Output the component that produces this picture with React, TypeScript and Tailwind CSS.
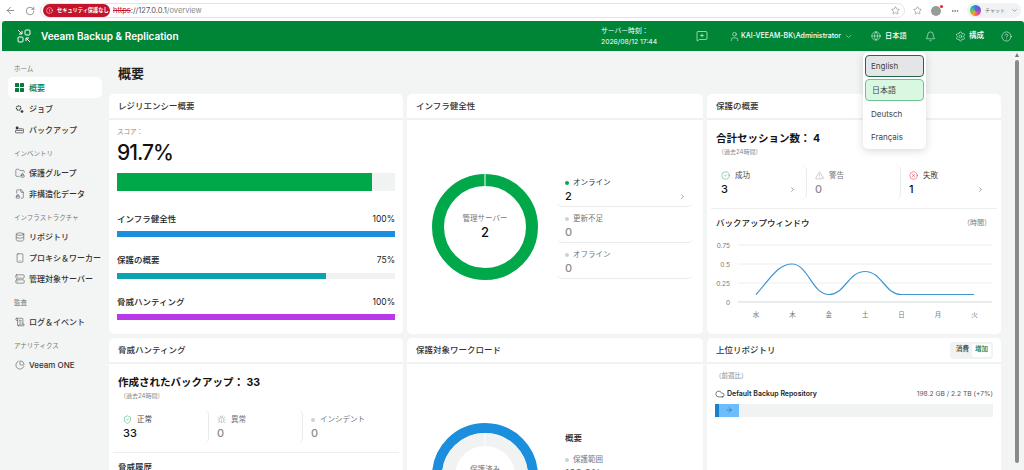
import {
  ArrowLeft, ArrowRight, Bell, ChevronDown, ChevronRight, CircleAlert, CircleCheck, CircleHelp, CircleX, Cloud, Database,
  Ellipsis, FileLock2, FolderLock, Globe, ChartPie, MessageSquarePlus, RotateCw, ScrollText, Server, Settings,
  ShieldCheck, Smartphone, Star, TriangleAlert, User, Bug,
} from "lucide-react"
import type { ReactNode } from "react"

const font = "font-['Inter','Noto_Sans_CJK_JP',sans-serif]"

function BrowserBar() {
  return (
    <div className="flex h-[21px] shrink-0 items-center bg-white pl-[4px]">
      <ArrowLeft className="ml-[1px] h-[11px] w-[11px] text-[#555]" strokeWidth={1.4} />
      <RotateCw className="ml-[9px] h-[10px] w-[10px] text-[#555]" strokeWidth={1.4} />
      <div className="ml-[5px] flex h-[15px] w-[865px] items-center rounded-full border border-[#e4e4e4] pl-[2px] pr-[2px]">
        <div className="flex h-[13px] w-[67px] items-center whitespace-nowrap rounded-full bg-[#c4132a] pl-[3px] text-[5.2px] font-bold text-white">
          <CircleAlert className="mr-[4px] h-[7px] w-[7px] shrink-0" strokeWidth={1.6} />
          <span>セキュリティ保護なし</span>
        </div>
        <p className="ml-[3px] whitespace-nowrap text-[7.5px] text-[#555]">
          <span className="text-[#c4132a] line-through">https</span>://127.0.0.1<span className="text-[#888]">/overview</span>
        </p>
        <Star className="ml-auto mr-[2px] h-[9px] w-[9px] text-[#666]" strokeWidth={1.3} />
      </div>
      <Star className="ml-[8px] h-[9px] w-[9px] text-[#666]" strokeWidth={1.3} />
      <div className="relative ml-[9px] h-[10px] w-[10px] rounded-full bg-[#9a9a9a]">
        <div className="absolute -right-[2px] -top-[1px] h-[3px] w-[3px] rounded-full bg-[#d9263a]" />
      </div>
      <Ellipsis className="ml-[10px] h-[8px] w-[8px] text-[#555]" />
      <div className="ml-[8px] flex h-[15px] w-[54px] items-center whitespace-nowrap rounded-full bg-[#f1f2f3] pl-[3px] text-[5px] text-[#666]">
        <div className="h-[11px] w-[11px] shrink-0 rounded-full bg-[conic-gradient(#2f7be8,#7a4fd8,#e8508a,#f5a623,#3cc48a,#2f7be8)]" />
        <span className="ml-[4px]">チャット</span>
        <ChevronDown className="ml-auto mr-[3px] h-[7px] w-[7px]" />
      </div>
    </div>
  )
}

function Logo() {
  return (
    <svg viewBox="0 0 14 14" className="h-[14px] w-[14px]" fill="none" stroke="white" strokeWidth="1">
      <rect x="8" y="1" width="5" height="5" rx="1" />
      <rect x="1" y="8" width="5" height="5" rx="1" />
      <path d="M1 1l4 4M5 2v3H2M9 9l4 4M9 12V9h3" />
    </svg>
  )
}

function Header() {
  return (
    <div className="ml-[2px] flex h-[30px] shrink-0 items-center whitespace-nowrap rounded-t-[3px] bg-[#008537] text-white">
      <div className="ml-[15px]"><Logo /></div>
      <p className="ml-[10px] w-[560px] text-[10px] font-semibold">Veeam Backup &amp; Replication</p>
      <div className="w-[95px] text-[6.8px] leading-[11px]">
        <p>サーバー時刻：</p>
        <p>2026/08/12 17:44</p>
      </div>
      <MessageSquarePlus className="h-[12px] w-[12px]" strokeWidth={1.2} />
      <User className="ml-[21px] h-[11px] w-[11px]" strokeWidth={1.2} />
      <p className="ml-[1px] w-[100px] text-[7px] font-medium">KAI-VEEAM-BK\Administrator</p>
      <ChevronDown className="ml-[3px] h-[9px] w-[9px]" strokeWidth={1.2} />
      <Globe className="ml-[18px] h-[10px] w-[10px]" strokeWidth={1.2} />
      <p className="ml-[4px] w-[22px] text-[7.2px] font-medium">日本語</p>
      <Bell className="ml-[18px] h-[11px] w-[11px]" strokeWidth={1.2} />
      <Settings className="ml-[19px] h-[11px] w-[11px]" strokeWidth={1.2} />
      <p className="ml-[3px] w-[15px] text-[7.5px] font-medium">構成</p>
      <CircleHelp className="ml-[17px] h-[11px] w-[11px]" strokeWidth={1.2} />
    </div>
  )
}

function GridIcon() {
  return (
    <svg viewBox="0 0 9 9" className="h-[9px] w-[9px]" fill="#0a7a3c">
      <rect width="4" height="4" rx=".5" />
      <rect x="5" width="4" height="4" rx=".5" />
      <rect y="5" width="4" height="4" rx=".5" />
      <rect x="5" y="5" width="4" height="4" rx=".5" />
    </svg>
  )
}

function JobIcon() {
  return (
    <svg viewBox="0 0 10 10" className="h-[10px] w-[10px]" fill="none" stroke="#444" strokeWidth="1">
      <circle cx="4" cy="4" r="2.4" strokeDasharray="1.4 .5" strokeWidth="1.4" />
      <circle cx="7.8" cy="7.8" r="1.5" fill="#333" stroke="none" />
    </svg>
  )
}

function BackupIcon() {
  return (
    <svg viewBox="0 0 11 10" className="h-[10px] w-[11px]" fill="none" stroke="#444" strokeWidth=".9">
      <circle cx="2.6" cy="2.6" r="1.8" fill="#333" stroke="none" />
      <path d="M4.5 3.5h5a1 1 0 0 1 1 1v3a1 1 0 0 1-1 1h-8a1 1 0 0 1-1-1V5.5h9" />
    </svg>
  )
}

function NavLabel({ text }: { text: string }) {
  return <p className="mb-[2px] mt-[6px] h-[14px] pl-[14px] pt-[3px] text-[6.5px] leading-[11px] text-[#777] first:mt-0">{text}</p>
}

function NavItem({ icon, text, active }: { icon: ReactNode; text: string; active?: boolean }) {
  return (
    <div className={`ml-[8px] flex h-[21px] w-[94px] items-center gap-[5px] rounded-[5px] pl-[7px] text-[8px] font-medium ${active ? "bg-white text-[#0a7a3c]" : "text-[#333]"}`}>
      <span className="flex w-[9px] justify-center">{icon}</span>
      <span>{text}</span>
    </div>
  )
}

const ic = "h-[10px] w-[10px] shrink-0 text-[#444]"

function Sidebar() {
  return (
    <div className="w-[108px] shrink-0 pt-[10px]">
      <NavLabel text="ホーム" />
      <NavItem active icon={<GridIcon />} text="概要" />
      <NavItem icon={<JobIcon />} text="ジョブ" />
      <NavItem icon={<BackupIcon />} text="バックアップ" />
      <NavLabel text="インベントリ" />
      <NavItem icon={<FolderLock className={ic} strokeWidth={1.3} />} text="保護グループ" />
      <NavItem icon={<FileLock2 className={ic} strokeWidth={1.3} />} text="非構造化データ" />
      <NavLabel text="インフラストラクチャ" />
      <NavItem icon={<Database className={ic} strokeWidth={1.3} />} text="リポジトリ" />
      <NavItem icon={<Smartphone className={ic} strokeWidth={1.3} />} text="プロキシ＆ワーカー" />
      <NavItem icon={<Server className={ic} strokeWidth={1.3} />} text="管理対象サーバー" />
      <NavLabel text="監査" />
      <NavItem icon={<ScrollText className={ic} strokeWidth={1.3} />} text="ログ＆イベント" />
      <NavLabel text="アナリティクス" />
      <NavItem icon={<ChartPie className={ic} strokeWidth={1.3} />} text="Veeam ONE" />
    </div>
  )
}

function Card({ title, right, children }: { title: string; right?: ReactNode; children: ReactNode }) {
  return (
    <div className="flex h-[240px] flex-col rounded-[5px] bg-white">
      <div className="flex h-[26px] shrink-0 items-center justify-between border-b-2 border-[#f0f2f2] pl-[9px] pr-[8px]">
        <p className="text-[8.5px] font-medium text-[#333]">{title}</p>
        {right}
      </div>
      <div className="min-h-0 flex-1">{children}</div>
    </div>
  )
}

function Meter({ name, value, color, pct }: { name: string; value: string; color: string; pct: string }) {
  return (
    <div className="mb-[16.5px]">
      <div className="flex h-[14px] items-center justify-between text-[8.5px] font-medium text-[#222]">
        <span>{name}</span>
        <span className="font-normal">{value}</span>
      </div>
      <div className="mt-[5px] h-[6px] bg-[#f1f3f3]">
        <div className={`h-full ${color} ${pct}`} />
      </div>
    </div>
  )
}

function Resilience() {
  return (
    <div className="px-[8px] pt-[7px]">
      <p className="text-[6.5px] leading-[10px] text-[#888]">スコア：</p>
      <p className="mt-[2px] text-[21px] font-medium leading-[28px] tracking-[-1px] text-[#111]">91.7%</p>
      <div className="mt-[6px] h-[18px] bg-[#f1f3f3]">
        <div className="h-full w-[91.7%] bg-[#00a84a]" />
      </div>
      <div className="mt-[21px]">
        <Meter name="インフラ健全性" value="100%" color="bg-[#1b8fdd]" pct="w-full" />
        <Meter name="保護の概要" value="75%" color="bg-[#0ca3b0]" pct="w-3/4" />
        <Meter name="脅威ハンティング" value="100%" color="bg-[#b938ea]" pct="w-full" />
      </div>
    </div>
  )
}

function LegendRow({ label, value, on, arrow }: { label: string; value: string; on?: boolean; arrow?: boolean }) {
  return (
    <div className="h-[36px] rounded-b-[5px] border-b border-[#e9ebeb] pl-[8px] pr-[7px] pt-[6px]">
      <div className={`flex h-[11px] items-center gap-[4px] text-[7.5px] ${on ? "text-[#333]" : "text-[#777]"}`}>
        <span className={`h-[4px] w-[4px] rounded-full ${on ? "bg-[#00a84a]" : "bg-[#cfd2d2]"}`} />
        {label}
      </div>
      <div className={`mt-[1px] flex items-center justify-between text-[11px] font-medium leading-[14px] ${on ? "text-[#111]" : "text-[#8a8a8a]"}`}>
        {value}
        {arrow && <ChevronRight className="h-[7px] w-[7px] text-[#555]" />}
      </div>
    </div>
  )
}

function Infra() {
  return (
    <div className="flex h-full items-center pl-[25px]">
      <div className="relative h-[106px] w-[106px] shrink-0">
        <svg viewBox="0 0 106 106" className="h-full w-full">
          <circle cx="53" cy="53" r="47" fill="none" stroke="#00a84a" strokeWidth="12" />
          <rect x="52.5" y="0" width="1" height="12" fill="white" />
        </svg>
        <div className="absolute inset-0 flex flex-col items-center justify-center">
          <p className="text-[7.5px] text-[#777]">管理サーバー</p>
          <p className="text-[13px] font-medium leading-[17px] text-[#111]">2</p>
        </div>
      </div>
      <div className="mb-[4px] ml-[19px] w-[136px]">
        <LegendRow on arrow label="オンライン" value="2" />
        <LegendRow label="更新不足" value="0" />
        <LegendRow label="オフライン" value="0" />
      </div>
    </div>
  )
}

function Stat({ icon, label, value, dim, arrow, last }: { icon: ReactNode; label: string; value: string; dim?: boolean; arrow?: boolean; last?: boolean }) {
  return (
    <div className={`h-[35px] flex-1 rounded-r-[6px] pl-[8px] pr-[10px] pt-[5px] ${last ? "" : "border-r border-[#e9ebeb]"}`}>
      <div className={`flex h-[11px] items-center gap-[5px] text-[7.5px] ${dim ? "text-[#777]" : "text-[#444]"}`}>
        {icon}
        {label}
      </div>
      <div className={`mt-[1px] flex items-center justify-between text-[11px] font-medium leading-[14px] ${dim ? "text-[#8a8a8a]" : "text-[#111]"}`}>
        {value}
        {arrow && <ChevronRight className="h-[7px] w-[7px] text-[#555]" />}
      </div>
    </div>
  )
}

function BackupChart() {
  const days = ["水", "木", "金", "土", "日", "月", "火"]
  const rows = [
    { y: 245, t: "0.75" },
    { y: 264, t: "0.5" },
    { y: 283, t: "0.25" },
    { y: 302, t: "0" },
  ]
  return (
    <svg viewBox="711 238 286 84" className="mt-[8px] h-[84px] w-[286px]">
      {rows.map((r) => (
        <g key={r.t}>
          <line x1="738" x2="992" y1={r.y} y2={r.y} stroke={r.t === "0" ? "#d5d8d8" : "#eceeee"} />
          <text x="730" y={r.y + 2.5} textAnchor="end" fontSize="6.5" fill="#777">{r.t}</text>
        </g>
      ))}
      {days.map((d, i) => (
        <text key={d} x={756 + i * 36.4} y="317" textAnchor="middle" fontSize="6.5" fill="#777">{d}</text>
      ))}
      <path
        d="M756 294.5C770 279 778 264 792 264C808 264 812 294.5 829 294.5C845 294.5 848 271.5 865 271.5C882 271.5 885 294.5 901 294.5L974 294.5"
        fill="none"
        stroke="#3d97d3"
        strokeWidth="1.2"
      />
    </svg>
  )
}

function SummaryTop({ title, children }: { title: string; children: ReactNode }) {
  return (
    <>
      <div className="pl-[5px] pt-[12px]">
        <p className="text-[10.5px] font-bold leading-[14px] text-[#111]">{title}</p>
        <p className="mt-[1px] pl-[2px] text-[6px] leading-[10px] text-[#888]">（過去24時間）</p>
      </div>
      <div className="mt-[8px] flex border-b border-[#edefef] pb-[8px] pl-[2px] pr-[3px]">{children}</div>
    </>
  )
}

function ProtectionSummary() {
  return (
    <div className="px-[4px]">
      <SummaryTop title="合計セッション数： 4">
        <Stat icon={<CircleCheck className="h-[9px] w-[9px] text-[#2fa565]" strokeWidth={1.3} />} label="成功" value="3" arrow />
        <Stat dim icon={<TriangleAlert className="h-[9px] w-[9px] text-[#999]" strokeWidth={1.3} />} label="警告" value="0" />
        <Stat last icon={<CircleX className="h-[9px] w-[9px] text-[#d9263a]" strokeWidth={1.3} />} label="失敗" value="1" arrow />
      </SummaryTop>
      <div className="mt-[8px] flex items-center justify-between pl-[5px] pr-[6px]">
        <p className="text-[8.5px] font-medium text-[#222]">バックアップウィンドウ</p>
        <p className="text-[7px] text-[#777]">（時間）</p>
      </div>
      <BackupChart />
    </div>
  )
}

function Threat() {
  return (
    <div className="px-[4px]">
      <SummaryTop title="作成されたバックアップ： 33">
        <Stat icon={<ShieldCheck className="h-[9px] w-[9px] text-[#2fa565]" strokeWidth={1.3} />} label="正常" value="33" />
        <Stat dim icon={<Bug className="h-[9px] w-[9px] text-[#aaa]" strokeWidth={1.2} />} label="異常" value="0" />
        <Stat last dim icon={<span className="h-[4px] w-[4px] rounded-full bg-[#cfd2d2]" />} label="インシデント" value="0" />
      </SummaryTop>
      <p className="mt-[8px] pl-[5px] text-[8.5px] font-medium text-[#222]">脅威履歴</p>
    </div>
  )
}

function Workloads() {
  return (
    <div className="flex pl-[25px] pt-[59px]">
      <div className="relative h-[106px] w-[106px] shrink-0">
        <svg viewBox="0 0 106 106" className="h-full w-full">
          <circle cx="53" cy="53" r="48" fill="none" stroke="#1b8fdd" strokeWidth="10" />
          <circle cx="53" cy="53" r="36.5" fill="none" stroke="#f1f3f3" strokeWidth="13" />
          <rect x="52.5" y="10" width="1" height="20" fill="white" />
        </svg>
        <p className="absolute inset-x-0 top-[41px] text-center text-[7.5px] text-[#777]">保護済み</p>
      </div>
      <div className="ml-[27px] pt-[9px]">
        <p className="text-[8.5px] font-medium leading-[12px] text-[#222]">概要</p>
        <div className="mt-[10px] flex items-center gap-[4px] text-[7.5px] leading-[11px] text-[#777]">
          <span className="h-[4px] w-[4px] rounded-full bg-[#cfd2d2]" />
          保護範囲
        </div>
        <p className="mt-[2px] text-[10px] font-medium leading-[13px] text-[#777]">100.0%</p>
      </div>
    </div>
  )
}

function Repos() {
  return (
    <div className="px-[8px] pt-[7px]">
      <p className="text-[6.5px] leading-[10px] text-[#888]">（前週比）</p>
      <div className="mt-[8px] flex items-center justify-between text-[7px]">
        <div className="flex items-center gap-[2px] font-semibold text-[#222]">
          <Cloud className="h-[10px] w-[10px]" strokeWidth={1.4} />
          Default Backup Repository
        </div>
        <span className="text-[6.7px] text-[#555]">198.2 GB / 2.2 TB (+7%)</span>
      </div>
      <div className="mt-[4px] h-[13px] bg-[#f1f3f3]">
        <div className="flex h-full w-[24px] items-center border-l-[4px] border-[#1b7fcc] bg-[#6cbdfc] pl-[6px]">
          <ArrowRight className="h-[8px] w-[8px] text-[#245]" strokeWidth={1.3} />
        </div>
      </div>
    </div>
  )
}

function Toggle() {
  return (
    <div className="flex h-[17px] items-center rounded-[3px] bg-[#f1f3f3] pl-[6px] pr-[2px] text-[6.5px] font-medium text-[#333]">
      <span className="mr-[3px]">消費</span>
      <span className="flex h-[13px] items-center rounded-[2px] bg-white px-[3px] text-[#0a7a3c]">増加</span>
    </div>
  )
}

function LanguageMenu() {
  return (
    <div className="absolute left-[863px] top-[52px] z-10 h-[97px] w-[63px] rounded-[5px] bg-white px-[2px] pt-[3px] text-[8px] text-[#444] shadow-[0_2px_8px_rgba(0,0,0,0.15)]">
      <div className="flex h-[22px] items-center rounded-[4px] border-[1.5px] border-[#24684a] bg-[#e4e5e6] pl-[5px]">English</div>
      <div className="mt-[1.5px] flex h-[22px] items-center rounded-[4px] border border-[#6cc391] bg-[#d9f8e2] pl-[6px]">日本語</div>
      <div className="mt-[1.5px] flex h-[23px] items-center pl-[6px]">Deutsch</div>
      <div className="flex h-[23px] items-center pl-[6px]">Français</div>
    </div>
  )
}

export default function App() {
  return (
    <div className={`relative flex h-[470px] w-[1024px] flex-col overflow-hidden bg-[#f3f4f4] ${font}`}>
      <BrowserBar />
      <Header />
      <div className="flex min-h-0 flex-1">
        <Sidebar />
        <div className="flex-1">
          <h1 className="flex h-[43px] items-center pl-[10px] pt-[3px] text-[13px] font-semibold text-[#222]">概要</h1>
          <div className="grid w-[893px] grid-cols-[294px_296px_294px] gap-[4px] pl-[1px]">
            <Card title="レジリエンシー概要"><Resilience /></Card>
            <Card title="インフラ健全性"><Infra /></Card>
            <Card title="保護の概要"><ProtectionSummary /></Card>
            <Card title="脅威ハンティング"><Threat /></Card>
            <Card title="保護対象ワークロード"><Workloads /></Card>
            <Card title="上位リポジトリ" right={<Toggle />}><Repos /></Card>
          </div>
        </div>
      </div>
      <LanguageMenu />
      <div className="absolute left-[1015px] top-[53px] h-0 w-0 border-x-[2.5px] border-b-[4px] border-x-transparent border-b-[#777]" />
      <div className="absolute left-[1015px] top-[60px] h-[403px] w-[4px] rounded-full bg-[#8a8a8a]" />
    </div>
  )
}
